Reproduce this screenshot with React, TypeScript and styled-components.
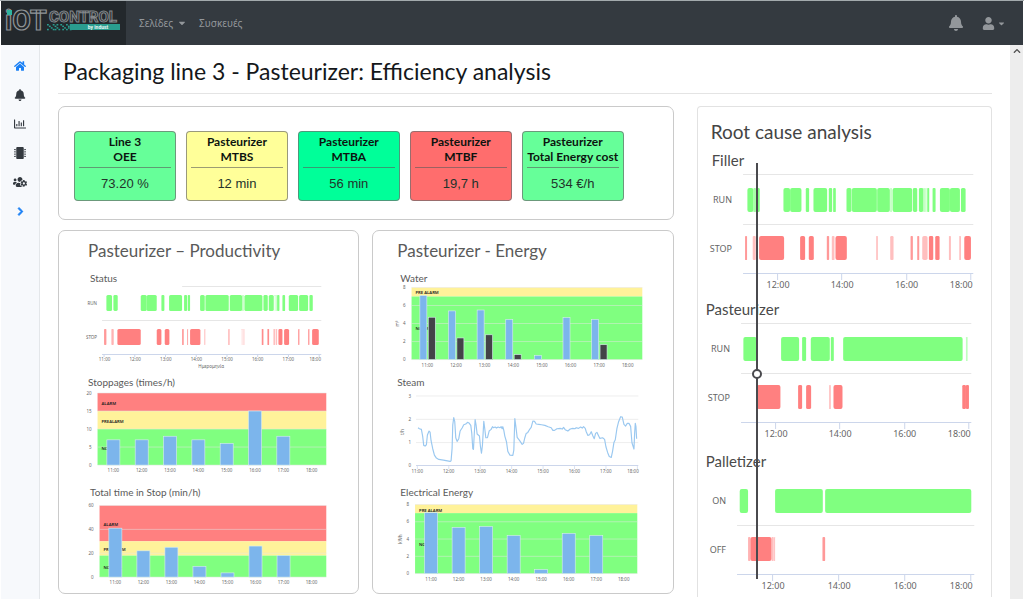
import React from "react";
import styled, { createGlobalStyle } from "styled-components";
import {
  FaBell,
  FaCaretDown,
  FaChevronRight,
  FaChevronUp,
  FaHome,
  FaMicrochip,
  FaRegChartBar,
  FaUser,
  FaUsersCog,
} from "react-icons/fa";

const humanist = '"Noto Sans", "Open Sans", sans-serif';
const heading = 'Lato, "Noto Sans", sans-serif';

const colors = {
  green: "#80ff80",
  red: "#ff8080",
  yellow: "#fff29a",
  blue: "#7cb5ec",
  dark: "#434348",
  text: "#5a5a5a",
  axis: "#ccd6eb",
  grid: "#e6e6e6",
};

const GlobalStyle = createGlobalStyle`
  * { box-sizing: border-box; }
  body { margin: 0; background: #ffffff; font-family: ${humanist}; color: #212529; }
  h1, h2, h3 { margin: 0; font-weight: 400; font-family: ${heading}; }
  a { text-decoration: none; color: inherit; }
  button { border: 0; padding: 0; background: none; color: inherit; font: inherit; cursor: pointer; }
`;

const Shell = styled.div`
  display: flex;
  flex-direction: column;
  min-height: 100vh;
  padding: 0 1px;
  border-top: 1px solid #a3aaad;
`;

const Navbar = styled.header`
  display: flex;
  align-items: stretch;
  height: 44px;
  background: #343a40;
  color: #93979b;
`;

const Brand = styled.a`
  display: flex;
  width: 125px;
  background: #23282c;
`;

const NavLinks = styled.nav`
  display: flex;
  align-items: center;
  gap: 12px;
  flex: 1;
  padding-left: 13px;
  font-size: 10px;
`;

const NavLink = styled.a`
  display: inline-flex;
  align-items: center;
  gap: 4px;
`;

const NavActions = styled.div`
  display: flex;
  align-items: center;
  gap: 18px;
  padding-right: 17px;
`;

const NavButton = styled.button`
  display: inline-flex;
  align-items: center;
  gap: 2px;
`;

const Body = styled.div`
  display: flex;
  flex: 1;
`;

const Sidebar = styled.nav`
  display: flex;
  flex-direction: column;
  align-items: center;
  gap: 17px;
  width: 39px;
  padding-top: 15px;
  background: #f7f9fc;
  border-right: 1px solid #e4e7ea;
`;

const SideLink = styled.a<{ $active?: boolean }>`
  display: flex;
  align-items: center;
  height: 12px;
  font-size: 12px;
  color: ${(p) => (p.$active ? "#1a80f5" : "#343a40")};
`;

const ScrollTrack = styled.div`
  display: flex;
  justify-content: center;
  width: 13px;
  padding-top: 2px;
  background: #ededed;
  color: #505050;
  font-size: 8px;
`;

const Content = styled.main`
  flex: 1;
  min-width: 0;
  padding: 0 18px;
`;

const PageHead = styled.div`
  padding: 10px 5px 6px;
  border-bottom: 1px solid #e4e4e4;
`;

const PageTitle = styled.h1`
  font-size: 23px;
  line-height: 32px;
  color: #14171a;
`;

const Columns = styled.div`
  display: grid;
  grid-template-columns: 615fr 295fr;
  gap: 23px;
  margin-top: 12px;
`;

const LeftColumn = styled.div`
  display: flex;
  flex-direction: column;
  gap: 10px;
`;

const Card = styled.section`
  border: 1px solid #cacaca;
  border-radius: 7px;
  background: #ffffff;
`;

const KpiCard = styled(Card)`
  display: grid;
  grid-template-columns: repeat(5, 1fr);
  gap: 10px;
  padding: 24px 49px 18px 15px;
`;

const KpiTile = styled.div<{ $color: string }>`
  display: flex;
  flex-direction: column;
  height: 70px;
  padding: 2px 4px;
  border: 1px solid rgba(110, 110, 110, 0.7);
  border-radius: 4px;
  background: ${(p) => p.$color};
  text-align: center;
`;

const KpiName = styled.div`
  display: flex;
  flex-direction: column;
  align-items: center;
  padding-bottom: 3px;
  border-bottom: 1px solid rgba(90, 90, 90, 0.6);
  font: 700 12px/15px ${heading};
  color: #0c140f;
  white-space: nowrap;
`;

const KpiValue = styled.div`
  font: 13px/31px "Liberation Sans", Arial, sans-serif;
  color: #22332b;
`;

const PanelRow = styled.div`
  display: grid;
  grid-template-columns: 1fr 1fr;
  gap: 13px;
`;

const PanelTitle = styled.h2<{ $inset: number }>`
  padding: 8px 0 8px ${(p) => p.$inset}px;
  font-size: 17px;
  line-height: 24px;
  color: ${colors.text};
`;

const ChartTitle = styled.h3<{ $inset: number }>`
  padding-left: ${(p) => p.$inset}px;
  font-size: 10px;
  line-height: 14px;
  color: ${colors.text};
`;

const Chart = styled.svg`
  display: block;
  width: 100%;
  height: auto;
  font-family: ${humanist};
`;

const RootCard = styled(Card)`
  position: relative;
  border-color: #e2e2e2;
  border-bottom: 0;
  border-radius: 4px 4px 0 0;
`;

const RootTitle = styled.h2`
  padding: 12px 0 5px 13px;
  font-size: 19px;
  line-height: 26px;
  color: #444444;
`;

const MachineTitle = styled.h3<{ $inset: number }>`
  padding-left: ${(p) => p.$inset}px;
  font-size: 15px;
  line-height: 20px;
  color: #4a4a4a;
`;

const CursorLine = styled.div`
  position: absolute;
  top: 56px;
  bottom: 18px;
  left: 20%;
  width: 2px;
  background: #4a4a4e;
`;

const CursorHandle = styled.div`
  position: absolute;
  top: 206px;
  left: -4px;
  width: 10px;
  height: 10px;
  border: 2px solid #4a4a4e;
  border-radius: 50%;
  background: #ffffff;
`;

type Segment = [from: number, to: number, opacity?: number];

interface Scale {
  domain: [number, number];
  range: [number, number];
}

const project = ({ domain, range }: Scale, v: number) =>
  range[0] + ((v - domain[0]) * (range[1] - range[0])) / (domain[1] - domain[0]);

interface LaneProps {
  segments: Segment[];
  scale: Scale;
  y: number;
  height: number;
  fill: string;
  radius: number;
}

const Lane = ({ segments, scale, y, height, fill, radius }: LaneProps) => (
  <g fill={fill}>
    {segments.map(([from, to, opacity = 1]) => {
      const x = project(scale, from);
      const width = project(scale, to) - x;
      return (
        <rect key={from} x={x} y={y} width={width} height={height} rx={Math.min(radius, width / 3)} opacity={opacity} />
      );
    })}
  </g>
);

/* ---------- status timeline ---------- */

const statusScale: Scale = { domain: [144, 788], range: [45, 259.5] };

const statusRun: Segment[] = [
  [151, 168], [172, 185], [254, 272], [272, 302], [316, 325], [339, 378], [384, 393], [395, 402],
  [432, 446], [448, 518], [521, 558], [558, 563, 0.5], [565, 619], [622, 635], [638, 653],
  [656, 658, 0.6], [660, 662, 0.6], [663, 670], [679, 687], [698, 726], [729, 756], [760, 770],
];

const statusStop: Segment[] = [
  [144, 151, 0.8], [166, 173, 0.6], [184, 254], [302, 316], [326, 340], [378, 383, 0.8],
  [393, 396, 0.7], [402, 433], [444, 448, 0.4], [516, 521, 0.5], [557, 559, 0.4], [562, 565, 0.4],
  [617, 622, 0.9], [634, 639, 0.9], [652, 657, 0.5], [659, 663, 0.5], [667, 679], [684, 699],
  [726, 730, 0.8], [756, 760, 0.8], [768, 788],
];

const hours = ["11:00", "12:00", "13:00", "14:00", "15:00", "16:00", "17:00", "18:00"];

const StatusChart = () => (
  <Chart viewBox="0 0 299 90" role="img" aria-label="Status">
    <g stroke={colors.grid}>
      <line x1="123" x2="262" y1="1.5" y2="1.5" />
      <line x1="43" x2="262" y1="35.5" y2="35.5" />
    </g>
    <Lane segments={statusRun} scale={statusScale} y={10} height={16} fill={colors.green} radius={1.5} />
    <Lane segments={statusStop} scale={statusScale} y={44} height={16} fill={colors.red} radius={1.5} />
    <line x1="43" x2="262" y1="69.5" y2="69.5" stroke={colors.axis} />
    <g fontSize="4.5" fill="#666666">
      <text x="38" y="20" textAnchor="end">RUN</text>
      <text x="38" y="54" textAnchor="end">STOP</text>
      {hours.map((h, i) => (
        <text key={h} x={i === 7 ? 256 : 45.5 + i * 30.6} y="76" textAnchor="middle">{h}</text>
      ))}
      <text x="152" y="83" textAnchor="middle">Ημερομηνία</text>
    </g>
    <g stroke={colors.axis}>
      {hours.map((h, i) => (
        <line key={h} x1={45 + i * 30.7} x2={45 + i * 30.7} y1="69" y2="72" />
      ))}
    </g>
  </Chart>
);

/* ---------- column charts with alarm bands ---------- */

interface Band {
  label: string;
  from: number;
  to: number;
  color: string;
  labelY: number;
}

interface BarChartProps {
  title: string;
  height: number;
  left: number;
  right: number;
  top: number;
  bottom: number;
  max: number;
  step: number;
  bands: Band[];
  series: { color: string; values: number[]; offset: number }[];
  barWidth: number;
  firstX: number;
  pitch: number;
  unit?: string;
}

const BarChart = (p: BarChartProps) => {
  const y = (v: number) => p.bottom - (v * (p.bottom - p.top)) / p.max;
  const steps = Array.from({ length: p.max / p.step + 1 }, (_, i) => i * p.step);
  return (
    <Chart viewBox={`0 0 299 ${p.height}`} role="img" aria-label={p.title}>
      {p.bands.map((b) => (
        <rect key={b.label} x={p.left} width={p.right - p.left} y={y(b.to)} height={y(b.from) - y(b.to)} fill={b.color} />
      ))}
      <g stroke="#e6e6e6" strokeWidth="0.7" opacity="0.7">
        {steps.map((s) => (
          <line key={s} x1={p.left} x2={p.right} y1={y(s)} y2={y(s)} />
        ))}
      </g>
      <g fontSize="4.2" fontWeight="600" fill="#222222">
        {p.bands.map((b) => (
          <text key={b.label} x={p.left + 4} y={b.labelY}>{b.label}</text>
        ))}
      </g>
      {p.series.map((s) => (
        <g key={s.color} fill={s.color} stroke="#d8ecf0" strokeWidth="0.6">
          {s.values.map((v, i) =>
            v > 0 ? (
              <rect
                key={i}
                x={p.firstX + i * p.pitch + s.offset - p.barWidth / 2}
                y={y(v)}
                width={p.barWidth}
                height={p.bottom - y(v)}
              />
            ) : null
          )}
        </g>
      ))}
      <g fontSize="4.5" fill="#666666">
        {steps.map((s) => (
          <text key={s} x={p.left - 6} y={y(s) + 1.5} textAnchor="end">{s}</text>
        ))}
        {hours.map((h, i) => (
          <text key={h} x={p.firstX + i * p.pitch} y={p.bottom + 7} textAnchor="middle">{h}</text>
        ))}
        {p.unit && (
          <text transform={`translate(${p.left - 13} ${(p.top + p.bottom) / 2}) rotate(-90)`} textAnchor="middle">
            {p.unit}
          </text>
        )}
      </g>
    </Chart>
  );
};

const energyBands = (alarmY: number, normalY: number): Band[] => [
  { label: "PRE ALARM", from: 7, to: 8, color: colors.yellow, labelY: alarmY },
  { label: "NORMAL", from: 0, to: 7, color: colors.green, labelY: normalY },
];

const limitBands = (max: number, alarm: number, pre: number, ys: number[]): Band[] => [
  { label: "ALARM", from: alarm, to: max, color: colors.red, labelY: ys[0] },
  { label: "PREALARM", from: pre, to: alarm, color: colors.yellow, labelY: ys[1] },
  { label: "NORMAL", from: 0, to: pre, color: colors.green, labelY: ys[2] },
];

/* ---------- steam line ---------- */

const steamPoints =
  "144,173 148,176 154,178 158,200 161,226 165,228 169,224 172,195 177,183 180,186 183,212 188,236 193,255 199,264 206,268 220,270 240,274 243,272 246,235 248,165 251,143 254,155 257,203 261,214 266,206 270,183 276,174 281,164 287,162 292,157 297,159 302,166 305,190 308,236 310,238 312,200 315,149 318,166 321,192 328,198 331,230 334,249 337,225 341,154 344,177 347,203 352,203 357,183 363,178 367,170 370,173 375,171 379,174 384,171 389,173 393,170 396,176 398,170 401,181 404,198 409,215 413,244 419,255 428,256 431,240 434,146 438,176 441,202 448,211 456,223 460,220 464,203 468,190 473,187 479,177 483,172 488,153 493,154 498,162 506,163 514,164 524,166 534,170 543,173 548,181 553,181 560,176 570,175 576,177 580,172 585,179 593,183 600,177 608,175 614,176 618,173 625,175 631,171 636,174 640,170 645,175 648,185 653,196 658,194 663,185 668,198 672,206 676,190 680,187 686,199 689,205 697,203 703,208 707,230 712,247 717,259 723,262 727,243 731,217 735,209 740,175 745,155 751,140 756,141 761,163 766,168 771,160 776,160 781,169 785,218 791,237 793,190 795,160 797,170 799,206";

const SteamChart = () => (
  <Chart viewBox="0 0 299 96" role="img" aria-label="Steam">
    <g stroke={colors.grid} strokeWidth="0.7">
      {[7, 30.3, 53.5].map((y) => (
        <line key={y} x1="43" x2="265" y1={y} y2={y} />
      ))}
    </g>
    <line x1="43" x2="265" y1="76.5" y2="76.5" stroke={colors.axis} />
    <g transform="translate(-3 -19) scale(0.33333)">
      <polyline points={steamPoints} fill="none" stroke="#9ac8f0" strokeWidth="3.5" strokeLinejoin="round" />
    </g>
    <g stroke={colors.axis} strokeWidth="0.7">
      {hours.map((h, i) => (
        <line key={h} x1={44.3 + i * 31.4} x2={44.3 + i * 31.4} y1="77" y2="80" />
      ))}
    </g>
    <g fontSize="4.5" fill="#666666">
      {[3, 2, 1, 0].map((v, i) => (
        <text key={v} x="38" y={8.5 + i * 23.2} textAnchor="end">{v}</text>
      ))}
      {hours.map((h, i) => (
        <text key={h} x={i === 7 ? 259.7 : 44.2 + i * 31.4} y="84" textAnchor="middle">{h}</text>
      ))}
      <text transform="translate(31 43) rotate(-90)" textAnchor="middle">t/h</text>
    </g>
  </Chart>
);

/* ---------- root cause timelines ---------- */

interface MachineProps {
  name: string;
  lanes: [string, string];
  on: Segment[];
  off: Segment[];
  axis: [number, number];
  ticks: number[];
  labels: number[];
  labelRight: number;
  height: number;
  topLine?: boolean;
}

const machineScale: Scale = { domain: [24, 924], range: [0, 300] };

const MachineChart = (p: MachineProps) => (
  <Chart viewBox={`0 0 293 ${p.height}`} role="img" aria-label={p.name}>
    <g stroke={colors.grid}>
      {p.topLine && <line x1={p.axis[0]} x2={p.axis[1]} y1="4.5" y2="4.5" />}
      <line x1={p.axis[0]} x2={p.axis[1]} y1="54.5" y2="54.5" />
    </g>
    <Lane segments={p.on} scale={machineScale} y={18} height={24} fill={colors.green} radius={2} />
    <Lane segments={p.off} scale={machineScale} y={66} height={24} fill={colors.red} radius={2} />
    <g stroke={colors.axis}>
      <line x1={p.axis[0]} x2={p.axis[1]} y1="103.5" y2="103.5" />
      {p.ticks.map((t) => (
        <line key={t} x1={t} x2={t} y1="103" y2="110" />
      ))}
    </g>
    <g fontSize="9" fill="#666666">
      <text x={p.labelRight} y="33" textAnchor="end">{p.lanes[0]}</text>
      <text x={p.labelRight} y="82" textAnchor="end">{p.lanes[1]}</text>
      {["12:00", "14:00", "16:00", "18:00"].map((h, i) => (
        <text key={h} x={p.labels[i]} y="118" textAnchor="middle">{h}</text>
      ))}
    </g>
  </Chart>
);

const fillerRun: Segment[] = [
  [172, 190], [190, 198, 0.7], [198, 209], [280, 300], [300, 334], [347, 357], [370, 411], [416, 426],
  [429, 437], [469, 484], [485, 560], [561, 599], [600, 605, 0.5], [607, 666], [668, 681], [686, 699],
  [699, 704, 0.5], [705, 709, 0.5], [711, 717], [727, 736], [749, 779], [779, 809], [812, 826],
];

const fillerStop: Segment[] = [
  [165, 171, 0.8], [188, 197, 0.5], [207, 282], [330, 345], [356, 371], [410, 417, 0.8],
  [425, 433, 0.5], [436, 470], [558, 563, 0.5], [600, 610, 0.5], [661, 668, 0.8], [681, 687, 0.8],
  [696, 712, 0.5], [716, 729], [735, 748], [776, 782, 0.5], [807, 812, 0.5], [822, 842],
];

const pasteurizerRun: Segment[] = [
  [160, 200], [273, 327], [336, 348], [362, 419], [422, 431], [459, 817], [827, 832, 0.5],
];

const pasteurizerStop: Segment[] = [
  [200, 271], [324, 336], [348, 363], [417, 422, 0.5], [430, 457], [816, 827], [827, 836],
];

const palletizerOn: Segment[] = [[149, 174], [255, 398], [405, 843]];

const palletizerOff: Segment[] = [
  [174, 181, 0.6], [181, 244], [244, 251, 0.5], [252, 255, 0.5], [397, 405, 0.8],
];

const kpis = [
  { line: "Line 3", name: "OEE", value: "73.20 %", color: "#66ff99" },
  { line: "Pasteurizer", name: "MTBS", value: "12 min", color: "#ffff99" },
  { line: "Pasteurizer", name: "MTBA", value: "56 min", color: "#00ff99" },
  { line: "Pasteurizer", name: "MTBF", value: "19,7 h", color: "#ff6d6d" },
  { line: "Pasteurizer", name: "Total Energy cost", value: "534 €/h", color: "#66ff99" },
];

const mosaic = [
  [0, 0], [1, 1], [2, 2], [3, 3], [0, 3], [3, 0], [4, 1], [5, 2], [6, 3], [5, 0], [4, 3],
  [7, 0], [8, 1], [9, 2], [8, 3], [10, 0], [10, 3], [11, 1], [11, 2], [12, 0], [12, 3],
];

const Logo = () => (
  <svg width="125" height="44" viewBox="0 0 125 44" role="img" aria-label="iOT Control by indust">
    <g fill="#23282c" fontFamily="Roboto, sans-serif" fontWeight="700">
      <text x="4" y="29" fontSize="27" stroke="#8f9497" strokeWidth="1.2">iOT</text>
      <text x="48" y="21" fontSize="15" stroke="#84898c" strokeWidth="1">CONTROL</text>
    </g>
    <rect x="6" y="9" width="5" height="5" fill="#2fb5a0" />
    <rect x="69" y="23" width="50" height="6" fill="#2a9d8f" />
    <g fill="#2a9d8f">
      {mosaic.map(([x, y]) => (
        <rect key={`${x}-${y}`} x={46 + x * 1.9} y={23 + y * 1.6} width="1.8" height="1.5" />
      ))}
    </g>
    <text x="97" y="28" fontSize="5" fontWeight="700" textAnchor="middle" fill="#e8f6f4" fontFamily="Roboto, sans-serif">
      by indust
    </text>
  </svg>
);

export default function App() {
  return (
    <>
      <GlobalStyle />
      <Shell>
        <Navbar>
          <Brand href="#">
            <Logo />
          </Brand>
          <NavLinks>
            <NavLink href="#pages">
              Σελίδες <FaCaretDown size={10} />
            </NavLink>
            <NavLink href="#devices">Συσκευές</NavLink>
          </NavLinks>
          <NavActions>
            <NavButton aria-label="Notifications">
              <FaBell size={16} />
            </NavButton>
            <NavButton aria-label="Account">
              <FaUser size={13} />
              <FaCaretDown size={9} />
            </NavButton>
          </NavActions>
        </Navbar>
        <Body>
          <Sidebar>
            <SideLink href="#home" aria-label="Home" $active><FaHome /></SideLink>
            <SideLink href="#alerts" aria-label="Alerts"><FaBell /></SideLink>
            <SideLink href="#charts" aria-label="Charts"><FaRegChartBar /></SideLink>
            <SideLink href="#devices" aria-label="Devices"><FaMicrochip /></SideLink>
            <SideLink href="#users" aria-label="Users"><FaUsersCog size={14} /></SideLink>
            <SideLink href="#expand" aria-label="Expand" $active>
              <FaChevronRight size={9} stroke="#1a80f5" strokeWidth={50} />
            </SideLink>
          </Sidebar>
          <Content>
            <PageHead>
              <PageTitle>Packaging line 3 - Pasteurizer: Efficiency analysis</PageTitle>
            </PageHead>
            <Columns>
              <LeftColumn>
                <KpiCard>
                  {kpis.map((k) => (
                    <KpiTile key={k.name} $color={k.color}>
                      <KpiName>
                        <span>{k.line}</span>
                        <span>{k.name}</span>
                      </KpiName>
                      <KpiValue>{k.value}</KpiValue>
                    </KpiTile>
                  ))}
                </KpiCard>
                <PanelRow>
                  <Card>
                    <PanelTitle $inset={29}>Pasteurizer – Productivity</PanelTitle>
                    <ChartTitle $inset={31}>Status</ChartTitle>
                    <StatusChart />
                    <ChartTitle $inset={29}>Stoppages (times/h)</ChartTitle>
                    <BarChart
                      title="Stoppages"
                      height={96}
                      left={38.5}
                      right={267}
                      top={4}
                      bottom={76}
                      max={20}
                      step={5}
                      bands={limitBands(20, 15, 10, [15.5, 33.5, 60.5])}
                      series={[{ color: colors.blue, values: [7, 7, 8, 7, 6, 15, 8], offset: 0 }]}
                      barWidth={13}
                      firstX={54.3}
                      pitch={28.3}
                    />
                    <ChartTitle $inset={31}>Total time in Stop (min/h)</ChartTitle>
                    <BarChart
                      title="Total time in Stop"
                      height={94}
                      left={40.5}
                      right={267}
                      top={6.5}
                      bottom={78}
                      max={60}
                      step={20}
                      bands={limitBands(60, 30, 18, [26.5, 51.5, 69.5])}
                      series={[{ color: colors.blue, values: [41, 22, 25, 9, 3.5, 26, 18], offset: 0 }]}
                      barWidth={13}
                      firstX={56.3}
                      pitch={28}
                    />
                  </Card>
                  <Card>
                    <PanelTitle $inset={24}>Pasteurizer - Energy</PanelTitle>
                    <ChartTitle $inset={27}>Water</ChartTitle>
                    <BarChart
                      title="Water"
                      height={90}
                      left={38.5}
                      right={269}
                      top={2.5}
                      bottom={74.5}
                      max={8}
                      step={2}
                      bands={energyBands(9, 45)}
                      series={[
                        { color: colors.blue, values: [7.1, 5.4, 5.5, 4.45, 0.45, 4.65, 4.45], offset: -4 },
                        { color: colors.dark, values: [4.7, 2.4, 2.75, 0.55, 0, 0, 1.65], offset: 4.4 },
                      ]}
                      barWidth={7}
                      firstX={54.3}
                      pitch={28.6}
                      unit="m³"
                    />
                    <ChartTitle $inset={24}>Steam</ChartTitle>
                    <SteamChart />
                    <ChartTitle $inset={27}>Electrical Energy</ChartTitle>
                    <BarChart
                      title="Electrical Energy"
                      height={94}
                      left={42}
                      right={264}
                      top={5.5}
                      bottom={74.5}
                      max={8}
                      step={2}
                      bands={energyBands(12.5, 47)}
                      series={[{ color: colors.blue, values: [7.05, 5.35, 5.45, 4.4, 0.45, 4.65, 4.4], offset: 0 }]}
                      barWidth={13}
                      firstX={58}
                      pitch={27.5}
                      unit="kWh"
                    />
                  </Card>
                </PanelRow>
              </LeftColumn>
              <RootCard>
                <RootTitle>Root cause analysis</RootTitle>
                <MachineTitle $inset={14}>Filler</MachineTitle>
                <MachineChart
                  name="Filler"
                  lanes={["RUN", "STOP"]}
                  on={fillerRun}
                  off={fillerStop}
                  axis={[45, 275]}
                  ticks={[79.5, 143.5, 208.5, 272.5]}
                  labels={[80, 144, 208.5, 263]}
                  labelRight={34}
                  height={129}
                  topLine
                />
                <MachineTitle $inset={8}>Pasteurizer</MachineTitle>
                <MachineChart
                  name="Pasteurizer"
                  lanes={["RUN", "STOP"]}
                  on={pasteurizerRun}
                  off={pasteurizerStop}
                  axis={[43, 273]}
                  ticks={[77.5, 141.5, 206.5, 270.5]}
                  labels={[78, 142, 206.5, 261]}
                  labelRight={32}
                  height={132}
                  topLine
                />
                <MachineTitle $inset={8}>Palletizer</MachineTitle>
                <MachineChart
                  name="Palletizer"
                  lanes={["ON", "OFF"]}
                  on={palletizerOn}
                  off={palletizerOff}
                  axis={[39, 276]}
                  ticks={[74.5, 140.5, 206.5, 272.5]}
                  labels={[75, 141, 207, 263]}
                  labelRight={28}
                  height={126}
                />
                <CursorLine>
                  <CursorHandle />
                </CursorLine>
              </RootCard>
            </Columns>
          </Content>
          <ScrollTrack>
            <FaChevronUp />
          </ScrollTrack>
        </Body>
      </Shell>
    </>
  );
}
